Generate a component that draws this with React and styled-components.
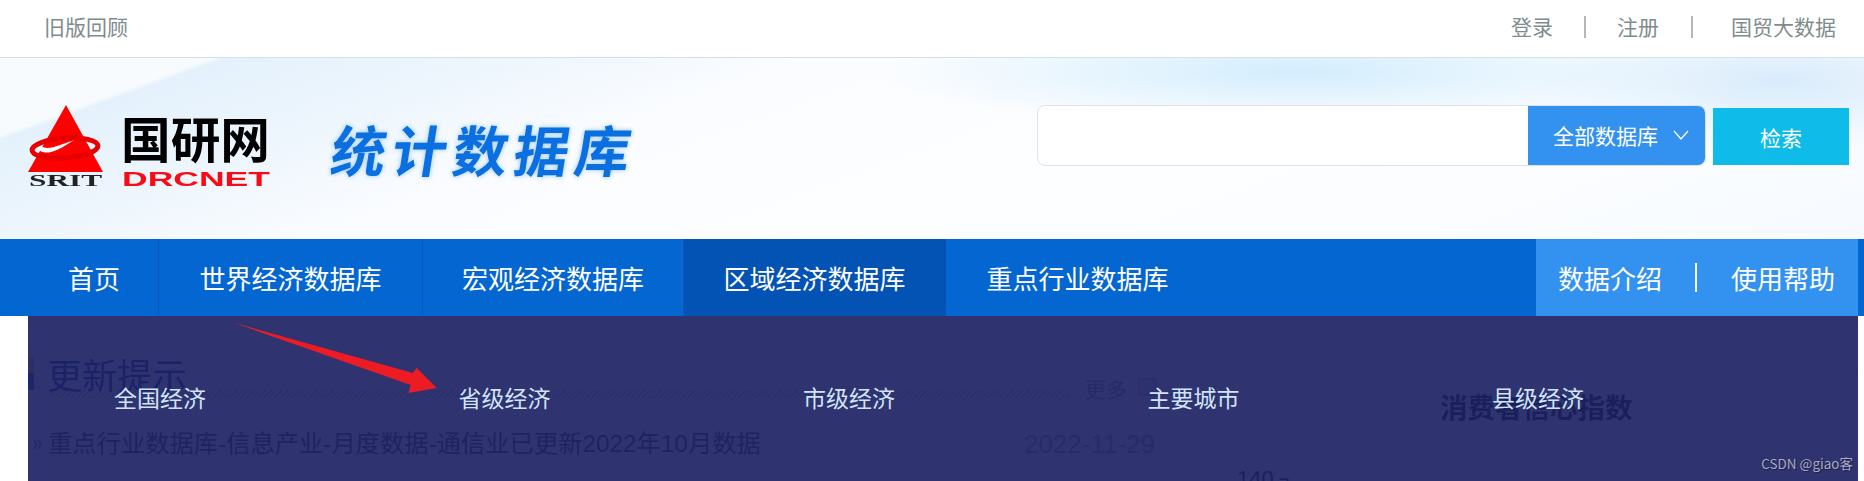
import React from "react";
import styled, { createGlobalStyle } from "styled-components";

const GlobalStyle = createGlobalStyle`
  html, body {
    margin: 0;
    padding: 0;
    background: #fff;
    overflow: hidden;
  }
  body {
    font-family: "Noto Sans CJK SC", "Liberation Sans", sans-serif;
  }
  * {
    box-sizing: border-box;
  }
`;

const Page = styled.div`
  width: 1864px;
  height: 481px;
  overflow: hidden;
`;

const TopBar = styled.div`
  height: 58px;
  display: flex;
  align-items: center;
  justify-content: space-between;
  padding: 0 28px 5px 44px;
  border-bottom: 1px solid #d3e1ef;
  font-size: 21px;
  color: #7f8c8d;
`;

const TopLinks = styled.div`
  display: flex;
  align-items: center;
`;

const TopDivider = styled.span`
  width: 2px;
  height: 22px;
  margin: 2px ${(p) => p.$right}px 0 ${(p) => p.$left}px;
  background: #b4b7b7;
`;

const Header = styled.header`
  height: 181px;
  display: flex;
  align-items: flex-start;
  padding: 47px 15px 0 28px;
  background:
    radial-gradient(ellipse 420px 56px at 1300px 14px, #d3edfd 0%, rgba(211, 237, 253, 0) 100%),
    radial-gradient(ellipse 260px 70px at 1780px 24px, #d8ebfb 0%, rgba(216, 235, 251, 0) 100%),
    linear-gradient(160deg, #f7fbfe 0%, #f7fbfe 9%, #e4f1fc 9.6%, #eef6fd 22%, #fafcff 34%, #fdfeff 55%, #fbfdff 80%, #f6faff 100%);
`;

const LogoMark = styled.svg`
  display: block;
  width: 242px;
  height: 82px;
  filter: blur(0.4px);
`;

const Title = styled.div`
  margin: 9px 0 0 62px;
  font-size: 55px;
  line-height: 68px;
  font-weight: 700;
  letter-spacing: 6px;
  color: #0b6fe0;
  white-space: nowrap;
  transform: skewX(-9deg);
  text-shadow: 0 0 5px #92c6f6;
`;

const SearchArea = styled.div`
  margin-left: auto;
  display: flex;
  gap: 7px;
`;

const SearchBox = styled.div`
  width: 669px;
  height: 61px;
  display: flex;
  justify-content: flex-end;
  background: #fff;
  border: 1px solid #dde3ec;
  border-radius: 8px;
  overflow: hidden;
`;

const ScopeSelect = styled.div`
  width: 177px;
  display: flex;
  align-items: center;
  padding: 0 0 2px 25px;
  gap: 15px;
  background: #3391f0;
  font-size: 21px;
  color: #fff;
`;

const SearchButton = styled.button`
  width: 136px;
  height: 57px;
  margin-top: 3px;
  padding: 0;
  border: 0;
  background: #0fbbe8;
  font: inherit;
  font-size: 21px;
  color: #fff;
`;

const Nav = styled.nav`
  height: 77px;
  display: flex;
  background: #0366d1;
  color: #fff;
  font-size: 26px;
`;

const NavMenu = styled.div`
  flex: 1;
  display: grid;
  grid-template-columns: 159px 264px 261px 262px 264px;
`;

const NavItem = styled.div`
  display: flex;
  align-items: center;
  justify-content: center;
  padding-left: ${(p) => p.$indent || 0}px;
  border-right: 1px solid ${(p) => (p.$plain ? "transparent" : "#0a5cba")};
  background: ${(p) => (p.$active ? "#0353b5" : "transparent")};
`;

const NavAside = styled.div`
  width: 322px;
  margin-right: 6px;
  display: flex;
  align-items: center;
  padding-left: 22px;
  background: #3391f0;
`;

const NavDivider = styled.span`
  width: 2px;
  height: 29px;
  margin: 0 34px 0 33px;
  background: #fff;
`;

const Content = styled.div`
  position: relative;
  height: 165px;
  overflow: hidden;
`;

const Behind = styled.div`
  width: 1858px;
  display: flex;
  padding-left: 28px;
`;

const NewsColumn = styled.div`
  width: 1129px;
  padding-top: 41px;
`;

const NewsHeading = styled.div`
  height: 41px;
  display: flex;
  background: repeating-linear-gradient(135deg, #bbb 0 1px, transparent 1px 4px) 22px bottom / 1020px 8px no-repeat;
`;

const BlueMark = styled.span`
  width: 6px;
  height: 33px;
  background: linear-gradient(#ffb060 0 50%, #0366d1 50% 100%);
`;

const NewsTitle = styled.h2`
  margin: 0 0 0 13px;
  font-size: 35px;
  line-height: 33px;
  font-weight: 400;
  color: #0b2f8c;
`;

const MoreLink = styled.div`
  margin-left: auto;
  padding-top: 16px;
  display: flex;
  align-items: flex-start;
  gap: 11px;
  font-size: 21px;
  line-height: 30px;
  color: #888;
`;

const MoreIcon = styled.span`
  width: 19px;
  height: 18px;
  margin-top: 5px;
  border: 2px solid #bbb;
  background: #ddd;
`;

const NewsRow = styled.div`
  margin-top: 31px;
  display: flex;
  align-items: center;
  font-family: "Liberation Sans", "Noto Sans CJK SC", sans-serif;
  font-size: 24.3px;
  line-height: 30px;
  color: #333;
`;

const RowArrow = styled.svg`
  width: 9px;
  height: 11px;
  margin: 0 6px 0 5px;
`;

const NewsDate = styled.span`
  margin: 0 2px 0 auto;
  font-size: 26px;
  color: #999;
`;

const ChartPanel = styled.div`
  flex: 1;
  height: 120px;
  margin: 55px 0 0 57px;
  border: 1px solid #ddd;
  border-width: 1px 0 0 1px;
`;

const ChartTitle = styled.h3`
  margin: 19px 0 0 225px;
  font-size: 27.5px;
  line-height: 30px;
  font-weight: 700;
  color: #000;
`;

const ChartAxis = styled.div`
  margin: 46px 0 0 22px;
  font-family: "Liberation Sans", sans-serif;
  font-size: 22px;
  line-height: 24px;
  color: #000;
`;

const DropPanel = styled.div`
  position: absolute;
  top: 0;
  bottom: 0;
  left: 28px;
  right: 6px;
  display: flex;
  gap: 252.5px;
  padding: 64px 0 0 86px;
  background: rgba(29, 34, 100, 0.92);
`;

const DropItem = styled.span`
  font-size: 23px;
  line-height: 34px;
  white-space: nowrap;
  color: #cfe4f7;
`;

const RedArrow = styled.svg`
  position: absolute;
  top: 0;
  left: 230px;
  width: 215px;
  height: 85px;
`;

const Watermark = styled.span`
  position: absolute;
  right: 11px;
  bottom: 11px;
  font-size: 13.5px;
  line-height: 14px;
  color: #a7a9c2;
  text-shadow: 1px 1px 1px rgba(0, 0, 0, 0.4);
`;

const dropItems = ["全国经济", "省级经济", "市级经济", "主要城市", "县级经济"];

const Logo = () => (
  <LogoMark viewBox="0 0 242 82">
    <polygon points="38,0 0,67 75,67" fill="#fe0000" />
    <ellipse cx="37" cy="43" rx="33" ry="10" fill="none" stroke="#e60000" strokeWidth="5" transform="rotate(-4 37 43)" />
    <path d="M9 43 C16 52 28 47 46 35 C32 40 20 46 13 41 Z" fill="#fff" />
    <text x="1" y="81" fontFamily="'Liberation Serif', serif" fontWeight="700" fontSize="16" textLength="73" lengthAdjust="spacingAndGlyphs" fill="#222">SRIT</text>
    <text x="93" y="53" fontFamily="'Noto Sans CJK SC', sans-serif" fontWeight="700" fontSize="49" textLength="149" lengthAdjust="spacingAndGlyphs" fill="#000">国研网</text>
    <text x="94" y="81" fontFamily="'Liberation Sans', sans-serif" fontWeight="700" fontSize="21" textLength="148" lengthAdjust="spacingAndGlyphs" fill="#fa0a14">DRCNET</text>
  </LogoMark>
);

const App = () => {
  return (
    <Page>
      <GlobalStyle />
      <TopBar>
        <span>旧版回顾</span>
        <TopLinks>
          <span>登录</span>
          <TopDivider $left={31} $right={31} />
          <span>注册</span>
          <TopDivider $left={32} $right={38} />
          <span>国贸大数据</span>
        </TopLinks>
      </TopBar>
      <Header>
        <Logo />
        <Title>统计数据库</Title>
        <SearchArea>
          <SearchBox>
            <ScopeSelect>
              全部数据库
              <svg width="16" height="10" viewBox="0 0 16 10" fill="none" stroke="#fff" strokeWidth="1.3">
                <polyline points="1,1 8,9 15,1" />
              </svg>
            </ScopeSelect>
          </SearchBox>
          <SearchButton>检索</SearchButton>
        </SearchArea>
      </Header>
      <Nav>
        <NavMenu>
          <NavItem $indent={30}>首页</NavItem>
          <NavItem>世界经济数据库</NavItem>
          <NavItem>宏观经济数据库</NavItem>
          <NavItem $active $plain>区域经济数据库</NavItem>
          <NavItem $plain>重点行业数据库</NavItem>
        </NavMenu>
        <NavAside>
          数据介绍
          <NavDivider />
          使用帮助
        </NavAside>
      </Nav>
      <Content>
        <Behind>
          <NewsColumn>
            <NewsHeading>
              <BlueMark />
              <NewsTitle>更新提示</NewsTitle>
              <MoreLink>
                更多
                <MoreIcon />
              </MoreLink>
            </NewsHeading>
            <NewsRow>
              <RowArrow viewBox="0 0 9 11" fill="none" stroke="#3d7fd0" strokeWidth="1.5">
                <polyline points="1,1 4,5.5 1,10" />
                <polyline points="5,1 8,5.5 5,10" />
              </RowArrow>
              重点行业数据库-信息产业-月度数据-通信业已更新2022年10月数据
              <NewsDate>2022-11-29</NewsDate>
            </NewsRow>
          </NewsColumn>
          <ChartPanel>
            <ChartTitle>消费者信心指数</ChartTitle>
            <ChartAxis>140 ┐</ChartAxis>
          </ChartPanel>
        </Behind>
        <DropPanel>
          {dropItems.map((item) => (
            <DropItem key={item}>{item}</DropItem>
          ))}
        </DropPanel>
        <RedArrow viewBox="0 0 215 85">
          <polygon points="3,6.5 183,57 186.5,51.7 206.6,72 178.5,77 180.7,69" fill="#ed1c24" />
        </RedArrow>
        <Watermark>CSDN @giao客</Watermark>
      </Content>
    </Page>
  );
};

export default App;
